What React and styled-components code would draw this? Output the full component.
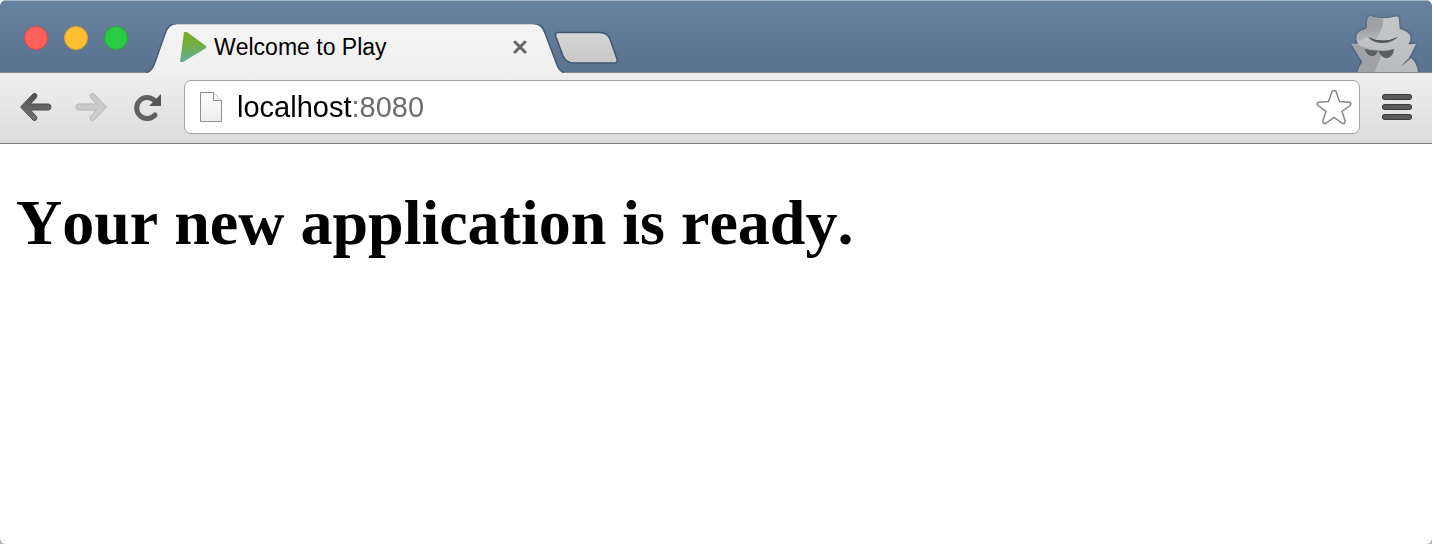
import React from "react";
import styled, { createGlobalStyle } from "styled-components";

const Global = createGlobalStyle`
  * { box-sizing: border-box; }
  body { margin: 0; background: linear-gradient(#fff 50%, #b4b4b4 50%); }
`;

const Window = styled.div`
  display: flex;
  flex-direction: column;
  min-height: 100vh;
  overflow: hidden;
  border-radius: 6px;
  background: #fff;
  font-family: "Liberation Sans", Arial, sans-serif;
`;

const TitleBar = styled.header`
  display: flex;
  align-items: flex-end;
  height: 73px;
  background: linear-gradient(#a3b4c6 0 1px, transparent 1px 72px, #89898b 72px),
    linear-gradient(#67829f, #5a7290);
`;

const Lights = styled.div`
  display: flex;
  gap: 16px;
  align-self: flex-start;
  padding: 26px 0 0 24px;
  width: 146px;
`;

const Light = styled.button`
  width: 24px;
  height: 24px;
  padding: 0;
  border: 1px solid ${(p) => p.$edge};
  border-radius: 50%;
  background: ${(p) => p.$fill};
`;

const Tab = styled.div`
  display: grid;
  width: 418px;
  height: 49px;
`;

const TabShape = styled.svg`
  grid-area: 1 / 1;
  display: block;
`;

const TabContent = styled.div`
  grid-area: 1 / 1;
  display: flex;
  align-items: center;
  padding: 0 37px 3px 34px;
  font-size: 23px;
  color: #000;
`;

const TabTitle = styled.span`
  flex: 1;
  margin-left: 8px;
  line-height: 46px;
  font-kerning: none;
`;

const IconButton = styled.button`
  display: flex;
  padding: 0;
  border: 0;
  background: none;
`;

const NewTab = styled(IconButton)`
  align-self: flex-start;
  margin: 31px 0 0 -10px;
`;

const Incognito = styled.svg`
  display: block;
  margin: 0 8px 1px auto;
`;

const Toolbar = styled.div`
  display: flex;
  align-items: center;
  height: 71px;
  padding: 0 20px 2px;
  border-bottom: 1px solid #7d7d7d;
  background: linear-gradient(#efefef, #dcdcdc);
`;

const Nav = styled.nav`
  display: flex;
  align-items: center;
  gap: 23px;
  width: 164px;
`;

const Omnibox = styled.label`
  display: flex;
  flex: 1;
  align-items: center;
  min-width: 0;
  height: 54px;
  margin-right: 22px;
  padding: 0 7px 0 14px;
  border: 1px solid #a3a3a3;
  border-radius: 7px;
  background: #fff;
`;

const Address = styled.input`
  flex: 1;
  min-width: 0;
  height: 40px;
  margin-left: 14px;
  padding: 0;
  border: 0;
  outline: 0;
  font: 29px/40px "Liberation Sans", Arial, sans-serif;
  color: transparent;
  caret-color: #000;
  background: linear-gradient(90deg, #000 115px, #6c6c6e 115px);
  -webkit-background-clip: text;
  background-clip: text;
`;

const Page = styled.main`
  flex: 1;
  padding: 42px 16px;
`;

const Heading = styled.h1`
  margin: 0;
  font: bold 64px/74px "Liberation Serif", "Times New Roman", serif;
  font-kerning: none;
  color: #000;
`;

const lights = [
  { name: "Close", fill: "#ff6059", edge: "#e14640" },
  { name: "Minimize", fill: "#ffbf2f", edge: "#dfa023" },
  { name: "Zoom", fill: "#29cc42", edge: "#1dab2c" },
];

function Arrow({ id, flip, from, to, edge }) {
  return (
    <svg width="32" height="30" viewBox="0 0 32 30" aria-hidden="true">
      <defs>
        <linearGradient id={id} x1="0" y1="0" x2="0" y2="1">
          <stop stopColor={from} />
          <stop offset="1" stopColor={to} />
        </linearGradient>
      </defs>
      <g transform={flip ? "matrix(-1 0 0 1 32 0)" : undefined}>
        <path
          d="M.6 15 13 2Q15 .8 16.400 2.200T16 6L10.400 12H28.500Q31 12.400 31 15T28.500 18H10.400L16 24Q17.800 26.200 16.400 27.700T13 28Z"
          fill={`url(#${id})`}
          stroke={edge}
          strokeWidth="1"
        />
      </g>
    </svg>
  );
}

export default function App() {
  return (
    <Window>
      <Global />
      <TitleBar>
        <Lights>
          {lights.map((l) => (
            <Light key={l.name} aria-label={l.name} $fill={l.fill} $edge={l.edge} />
          ))}
        </Lights>
        <Tab>
          <TabShape width="418" height="49" viewBox="0 0 418 49" aria-hidden="true">
            <defs>
              <linearGradient id="tab" x1="0" y1="0" x2="0" y2="1">
                <stop stopColor="#f4f4f4" />
                <stop offset="1" stopColor="#efefef" />
              </linearGradient>
            </defs>
            <path d="M0 49Q5 48 8 41L19 10Q22 0 31 0H387Q396 0 399 9L411 41Q414 48 418 49Z" fill="url(#tab)" />
            <path d="M0 48.500Q5 48 8 41L19 10Q22 -.5 31 -.5H387Q396 -.5 399 9L411 41Q414 48 418 48.500" fill="none" stroke="#465b73" strokeWidth="1.500" />
          </TabShape>
          <TabContent>
            <svg width="26" height="30" viewBox="0 0 26 30" aria-hidden="true">
              <defs>
                <linearGradient id="play" x1="0" y1="0" x2="0" y2="1">
                  <stop offset=".3" stopColor="#77ad35" />
                  <stop offset="1" stopColor="#5fae9c" />
                </linearGradient>
              </defs>
              <path d="M4 0H7L26 14V16L3 30H0Z" fill="url(#play)" />
            </svg>
            <TabTitle>Welcome to Play</TabTitle>
            <IconButton aria-label="Close tab">
              <svg width="14" height="14" viewBox="0 0 14 14" aria-hidden="true">
                <path d="M2 2 12 12M12 2 2 12" stroke="#666" strokeWidth="3" strokeLinecap="round" />
              </svg>
            </IconButton>
          </TabContent>
        </Tab>
        <NewTab aria-label="New tab">
          <svg width="65" height="34" viewBox="0 0 65 34" aria-hidden="true">
            <defs>
              <linearGradient id="newtab" x1="0" y1="0" x2="0" y2="1">
                <stop stopColor="#d6d6d6" />
                <stop offset="1" stopColor="#c9c9c9" />
              </linearGradient>
            </defs>
            <path d="M4 1.500H46Q53 1.500 56 8L63 28Q64 32 60 32H20Q13 32 9 25L2 6Q.5 1.500 4 1.500Z" fill="url(#newtab)" stroke="#41566f" strokeWidth="1.500" />
          </svg>
        </NewTab>
        <Incognito width="80" height="62" viewBox="132 30 240 186" role="img" aria-label="Incognito">
          <defs>
            <linearGradient id="spy" x1="0" y1="0" x2="0" y2="1">
              <stop stopColor="#c5c7c9" />
              <stop offset="1" stopColor="#b9bbbd" />
            </linearGradient>
            <linearGradient id="crown" x1="0" y1="0" x2="0" y2="1">
              <stop offset=".4" stopColor="#9fa2a5" />
              <stop offset="1" stopColor="#b4b7b9" />
            </linearGradient>
            <filter id="glow" x="-20%" y="-20%" width="140%" height="140%">
              <feDropShadow dx="0" dy="0" stdDeviation="5" floodColor="#26384c" floodOpacity=".8" />
            </filter>
          </defs>
          <path d="M204 52Q212 47 220 51Q250 59 284 50Q292 48 296 53L299 87Q328 94 331 112Q332 124 325 133L348 132 322 184Q314 190 306 198Q318 190 333 174Q352 190 354 217H174Q176 200 188 186L154 131 174 132Q166 114 173 102Q180 91 200 88Z" fill="url(#spy)" filter="url(#glow)" />
          <path d="M204 52Q212 47 220 51L250 57Q252 84 226 119Q210 116 203 110L174 124Q168 112 173 102Q180 91 200 88Z" fill="url(#crown)" />
          <path d="M154 131 176 134Q205 150 246 150L242 172 224 217H174Q176 200 188 186Z" fill="#a0a3a6" />
          <path d="M203 110Q248 132 295 110Q274 129 247 129Q220 129 203 110Z" fill="#55585b" />
          <path d="M194 146Q212 152 233 152Q230 166 216 169Q200 166 194 146ZM235 153Q260 154 282 147Q280 172 260 175Q242 172 235 153Z" fill="#5b5e61" />
          <path d="M303 199 333 173 320 180Z" fill="#4f5862" />
        </Incognito>
      </TitleBar>
      <Toolbar>
        <Nav aria-label="History">
          <IconButton aria-label="Back">
            <Arrow id="back" from="#505050" to="#757575" edge="#4c4c4c" />
          </IconButton>
          <IconButton aria-label="Forward" disabled>
            <Arrow id="forward" flip from="#c6c6c6" to="#d0d0d0" edge="#b4b4b4" />
          </IconButton>
          <IconButton aria-label="Reload">
            <svg width="32" height="30" viewBox="-2 0 32 30" aria-hidden="true">
              <path d="M22 8A10.500 10.500 0 1 0 23 23" fill="none" stroke="#606060" strokeWidth="5" strokeLinecap="round" />
              <path d="M29 2V14H17Z" fill="#555" />
            </svg>
          </IconButton>
        </Nav>
        <Omnibox>
          <svg width="24" height="32" viewBox="0 0 24 32" aria-hidden="true">
            <defs>
              <linearGradient id="doc" x1="0" y1="0" x2="0" y2="1">
                <stop stopColor="#fff" />
                <stop offset="1" stopColor="#ececec" />
              </linearGradient>
            </defs>
            <path d="M1.500 1.500H14.500L22.500 9.500V30.500H1.500Z" fill="url(#doc)" stroke="#8c8c8c" />
            <path d="M14.500 1.500V9.500H22.500" fill="#fff" stroke="#8c8c8c" />
          </svg>
          <Address aria-label="Address" defaultValue="localhost:8080" spellCheck={false} />
          <IconButton aria-label="Bookmark this page">
            <svg width="36" height="36" viewBox="0 0 36 36" aria-hidden="true">
              <path d="M16 2.500Q18 .3 20 2.500L23.500 12.500 33.500 13.200Q36 14.200 34 16.500L26 22.500 29.200 32Q29 35 26.500 34.500L18 28.500 9.500 34.500Q7 35 6.800 32L10 22.500 2 16.500Q0 14.200 2.500 13.200L12.500 12.500Z" fill="#fff" stroke="#858585" strokeWidth="1.500" />
            </svg>
          </IconButton>
        </Omnibox>
        <IconButton aria-label="Menu">
          <svg width="30" height="28" viewBox="0 0 30 28" aria-hidden="true">
            {[1, 11, 21].map((y) => (
              <g key={y}>
                <rect y={y} width="30" height="6" rx="3" fill="#3c3c3c" />
                <rect x="1" y={y + 1} width="28" height="4" rx="2" fill="#5a5a5a" />
              </g>
            ))}
          </svg>
        </IconButton>
      </Toolbar>
      <Page>
        <Heading>Your new application is ready.</Heading>
      </Page>
    </Window>
  );
}
